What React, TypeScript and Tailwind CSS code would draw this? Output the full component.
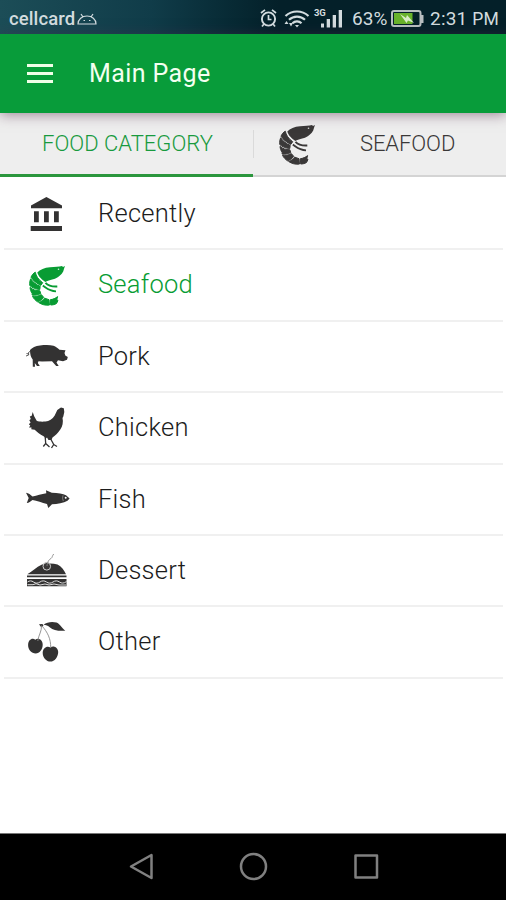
import type { ReactNode } from "react";

type IconProps = { className?: string };

function Icon({ className = "", children }: IconProps & { children: ReactNode }) {
  return (
    <svg viewBox="0 0 44 44" fill="currentColor" className={`h-11 w-11 shrink-0 overflow-visible ${className}`}>
      {children}
    </svg>
  );
}

function BankIcon() {
  return (
    <Icon>
      <path d="M21.4 5 37 13.5V16.2H6V13.5ZM9 19.2h4.8v11H9ZM19 19.2h4.8v11H19ZM29 19.2h4.8v11H29ZM5.7 34H37v5H5.7Z" />
    </Icon>
  );
}

function ShrimpIcon({ className }: IconProps) {
  return (
    <Icon className={className}>
      <path d="M12.3 9.6C15 6.5 19.5 4.8 25 4.3 30 3.9 34 3.7 37 3l1 1 2-1-.8 2.3-1 3.2C36.5 11.5 34 14 30 15.8c-4 1.3-7 1.4-9.8 3.2C17.5 17 13.5 14 12.3 9.6Z" />
      <g stroke="currentColor" strokeWidth="1" strokeLinejoin="round">
        <path d="M10.3 9.2C11 13 13.5 16.7 17.7 19.7L15.8 22.4C12 20.6 8 17.5 6 14.2 7 11.8 8.5 10.2 10.3 9.2Z" />
        <path d="M5.7 15.8C8 19.3 11.5 21.8 15.2 23.3L14.8 26.5C11 26.3 7.5 25 4.8 22.6 4.5 20 4.8 17.8 5.7 15.8Z" />
        <path d="M5 24.4C7.5 26.6 11 27.8 14.8 27.7L15.8 30.5C13 32 10 32.5 7 32L7.3 30.8C6 28.8 5.2 26.7 5 24.4Z" />
        <path d="M7.5 33.3C10.5 33.7 13.5 33.2 16.3 31.6L18.8 34.4C17 36.5 15 38 12.5 38.8 10.2 37.3 8.7 35.5 7.5 33.3Z" />
        <path d="M13.6 39.5C16 38.6 18 37.2 19.8 35.2L24 36.7 24.5 42C20.5 42.6 17 41.7 13.6 39.5Z" />
        <path d="M25.3 36.7C28 36.4 30.5 35.3 32.6 33.6L31.8 36.6 33 37.5 31.5 40.5C29.8 41.5 27.8 42 25.7 42Z" />
      </g>
      <path
        d="M20.5 19.8C23 22.6 27 23.8 32.3 23.5M17.8 22.7C21 24.5 23.5 28.2 31 28.4"
        fill="none"
        stroke="currentColor"
        strokeWidth="1.9"
      />
      <circle cx="33.5" cy="6.3" r=".8" fill="#fff" opacity=".8" />
    </Icon>
  );
}

function PigIcon() {
  return (
    <Icon>
      <path d="M5 16C7 13.5 10.5 11.8 15 11.4 20 10.9 25 10.8 28.5 11.7 31 12.4 32.5 14 34.5 15.8L40.5 16.3 39.5 19 40.3 21.5 42.8 23 42 25.7 38 27.2 33 26.3 31.5 28.5 33.7 32H31.2L27 27.2 17 27.5 13.5 27.2 12.8 29 14.8 32H12L9.8 29 10 32.7H7.8L7.7 25.5C6 23.5 5 20.5 5 16Z" />
      <path d="M5.5 17 3.5 18.5 3.7 21 1 22M3.5 20 1.5 19.5" fill="none" stroke="currentColor" strokeWidth=".8" />
    </Icon>
  );
}

function ChickenIcon() {
  return (
    <Icon>
      <path d="M7.7 6 9.3 10.5 11.7 14.8C14 15.9 17.5 15.7 20.5 15.6 24 15 27.5 13.2 29.7 9.5L32.3 4 34.8 2.3 36 1.5 38.8 2.3 39.3 6 38.3 10.5 37.5 12C38.5 16 37.5 20.5 35.3 23.5 33 27 30 30 27.5 31.5L26.5 34H23.5L22 31.5 20.3 33 19 30.5C14.5 28.5 11.7 25.7 9.7 23.8L6.3 23.3 6.5 21.6 4 21.5 5.3 19.5 3.8 18.3 5.6 16.6 4.3 14.3 5.8 13 4.8 10.5 6.7 9.8Z" />
      <path
        d="M20.3 32 20.7 37.5 18.3 40.5M20.7 37.5 24.5 41M26 33.5 28.7 38.5 26.5 42M28.7 38.5 32 40.5"
        fill="none"
        stroke="currentColor"
        strokeWidth="1.3"
      />
    </Icon>
  );
}

function FishIcon() {
  return (
    <Icon>
      <path d="M1 15.7C3.5 16.2 5.5 17.5 7.5 19.5 12 18.8 16.5 16.8 21.3 16.2L21 13.3 26.8 15.7C33 15.7 38 16.5 41 18.3L44.6 21.5 42.5 23.7C38.5 26 32.5 27 27 27.3L23.3 31 22 27C17 26 12 23.5 7.5 23 5.5 24.5 4 25.8 1.8 26L3.7 21Z" />
      <circle cx="40.7" cy="20.7" r="1" fill="#fff" />
      <path d="M38 18.3Q37 21.5 38.3 24" fill="none" stroke="#999" strokeWidth=".7" />
    </Icon>
  );
}

function CakeIcon() {
  return (
    <Icon>
      <path d="M2.3 25.2C7 22.5 11 18.3 17 15.5 22 14 28 14 32.5 15.5 36.5 17.5 39 21 41 25.2ZM2 26.6H41.5V28.3H2ZM2 30H41.5V37.3H2Z" />
      <path
        d="M2.5 33C4.5 31.5 6.5 31.5 8.5 33S13 34.5 15 33 19.5 31.5 21.5 33 26 34.5 28 33 32.5 31.5 34.5 33 39 34.5 41.5 32.5M2.5 35.7H8L11 34.7 15 36 20 35 24 36 29 35 34 36H41"
        fill="none"
        stroke="#ddd"
        strokeWidth="1"
      />
      <circle cx="21.8" cy="17.3" r="3.8" fill="#3a3838" stroke="#ccc" strokeWidth="1" />
      <path d="M22 17C22.5 12.5 24 10.5 26 9.5 27.5 8.5 27 7 28.7 5" fill="none" stroke="#888" strokeWidth=".9" />
    </Icon>
  );
}

function CherryIcon() {
  return (
    <Icon>
      <path d="M10.3 19.8C13 17.5 17.5 19.5 17.7 24.5 17.8 29.5 14.5 33.4 10.7 33.4 6.5 33.4 3 29.5 3.1 25 3.2 19.5 7.5 17.5 10.3 19.8ZM25.4 27.5C28.5 25.2 33 27.5 33.2 32 33.2 37 29.5 41.6 25.5 41.6 21.3 41.6 17.7 37.5 17.7 33 17.7 27.8 22.3 25.2 25.4 27.5Z" />
      <path d="M18.5 4.7C22 2 27 1.3 31.5 2.5 34.5 3.5 36.5 7.5 40.3 10.7 34 11.3 28 10.3 25 7.5 23 5.6 21 5 18.5 4.7ZM14 4.3 17.5 4 18.5 6 16 7Z" />
      <path d="M16.5 5.5C17 11 13.5 15 12.8 21M17 6C22.5 12 26 19 25.7 28" fill="none" stroke="#8a8a8a" strokeWidth=".9" />
    </Icon>
  );
}

const categories = [
  { name: "Recently", icon: <BankIcon /> },
  { name: "Seafood", icon: <ShrimpIcon />, active: true },
  { name: "Pork", icon: <PigIcon /> },
  { name: "Chicken", icon: <ChickenIcon /> },
  { name: "Fish", icon: <FishIcon /> },
  { name: "Dessert", icon: <CakeIcon /> },
  { name: "Other", icon: <CherryIcon /> },
];

function StatusBar() {
  return (
    <div className="flex h-[34px] items-center bg-linear-to-r from-[#1c4d57] via-[#103c49] via-30% to-[#042029] to-55% pt-1 text-[#d3dcdf]">
      <span className="ml-[9px] w-[68px] text-[18.5px] leading-none font-medium tracking-[0.1px]">cellcard</span>
      <svg viewBox="0 0 20 12" className="h-3 w-5" fill="none" stroke="currentColor" strokeWidth="1.2">
        <path d="M1 11C1 6.5 5 3 10 3S19 6.5 19 11ZM4 1 6 4M16 1 14 4M6.5 7.5H8M12 7.5H13.5" />
      </svg>
      <div className="ml-[163px] flex w-[84px] items-start">
        <svg viewBox="0 0 52 24" className="h-6 w-[52px] shrink-0" fill="none" stroke="currentColor">
          <circle cx="8.5" cy="12" r="6.6" strokeWidth="1.9" />
          <path d="M8.5 8V12.5H11.5M1 6 5 2.8M16 6 12 2.8M4 17 2 19.5M13 17 15 19.5" strokeWidth="1.7" />
          <path d="M25.5 9C32 3 42 3 48.500 9M29 12.8C33.5 8.5 40.5 8.5 45 12.8M32.5 16.3C35 13.8 39 13.8 41.5 16.3" strokeWidth="2.2" />
          <path d="M35 18H39L37 20.5ZM24.5 17 26.5 14 28.5 17ZM29 16H33L31 19.5Z" fill="currentColor" stroke="none" />
        </svg>
        <span className="ml-[2px] w-[12px] text-[9.5px] leading-[11px] font-bold tracking-[-0.3px] whitespace-nowrap">3G</span>
        <svg viewBox="0 0 22 24" className="-ml-[5px] h-6 w-[22px] shrink-0" fill="currentColor">
          <path d="M0 16.5H3V20.5H0ZM5.7 12H9V20.5H5.7ZM11.7 8H15V20.5H11.7ZM17.7 3H21V20.5H17.7Z" />
        </svg>
      </div>
      <span className="mb-[2px] ml-[8px] w-[39px] text-[19px] leading-none tracking-[0.1px]">63%</span>
      <svg viewBox="0 0 33 18" className="h-[18px] w-[33px]">
        <rect x="1" y="1" width="28.5" height="15" rx="2" fill="none" stroke="#b9bfc1" strokeWidth="2" />
        <path d="M30 5H32.5V13H30Z" fill="#b9bfc1" />
        <path d="M3 3H21.5V14H3Z" fill="#68b22b" />
        <path d="M9 4 15 8 16 5 23 13 17 10.5 15.5 13Z" fill="#d9edc8" />
      </svg>
      <span className="ml-[6px] text-[19px] leading-none tracking-[0.2px] whitespace-nowrap">
        2:31 <span className="text-[17.5px]">PM</span>
      </span>
    </div>
  );
}

function AppHeader() {
  return (
    <header className="relative z-10 flex h-[79px] items-center bg-[#089c3a] text-[#f3fff0] shadow-[0_2px_12px_rgba(80,40,70,0.5)]">
      <button className="ml-[27px] flex w-[26px] flex-col gap-[5px]" aria-label="Menu">
        <span className="h-[3px] w-full bg-[#f0ffe8]" />
        <span className="h-[3px] w-full bg-[#f0ffe8]" />
        <span className="h-[3px] w-full bg-[#f0ffe8]" />
      </button>
      <h1 className="ml-[36px] text-[25px] leading-none tracking-[0.4px]">Main Page</h1>
    </header>
  );
}

function Tabs() {
  return (
    <div className="flex h-16 bg-[#eeeeee]">
      <div className="flex w-[253px] items-center justify-center border-b-[3px] border-[#2b963d] pl-[2px] text-[22px] leading-none font-light text-[#189a3e]">
        FOOD CATEGORY
      </div>
      <div className="flex flex-1 items-center border-b-2 border-[#d4d4d4] text-[#3a3838]">
        <div className="h-7 w-px bg-[#dadada]" />
        <ShrimpIcon className="ml-[21px]" />
        <span className="ml-[41px] text-[22px] leading-none font-light tracking-[-0.1px]">SEAFOOD</span>
      </div>
    </div>
  );
}

function NavBar() {
  return (
    <div className="flex h-[67px] items-center justify-center border-t border-[#777] bg-black text-[#808080]">
      <svg viewBox="0 0 254 30" className="h-[30px] w-[254px]" fill="none" stroke="currentColor" strokeWidth="2.5" strokeLinejoin="round">
        <path d="M5 14.5 25.5 3V26Z" />
        <circle cx="127.5" cy="14.5" r="12.5" />
        <rect x="229.5" y="3.5" width="21.5" height="22" />
      </svg>
    </div>
  );
}

export default function App() {
  return (
    <div className="flex h-[900px] w-[506px] flex-col overflow-hidden bg-white font-['Roboto',sans-serif]">
      <StatusBar />
      <AppHeader />
      <Tabs />
      <ul className="flex-1 pt-[2px] pr-[3px] pl-1">
        {categories.map((category) => (
          <li
            key={category.name}
            className={`flex h-[71.4px] items-center border-b-2 border-[#f0f0f0] pl-[21px] ${
              category.active ? "text-[#089c33]" : "text-[#333232]"
            }`}
          >
            {category.icon}
            <span className={`ml-[29px] text-[25.5px] leading-none font-light tracking-[0.25px] ${category.active ? "" : "text-[#1c1c1c]"}`}>
              {category.name}
            </span>
          </li>
        ))}
      </ul>
      <NavBar />
    </div>
  );
}
